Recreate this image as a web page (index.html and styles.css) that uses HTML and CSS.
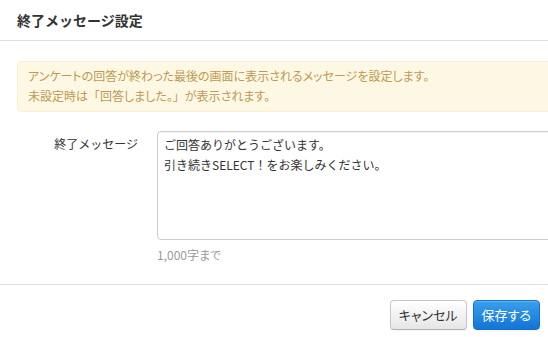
FILE: index.html
```html
<!DOCTYPE html>
<html lang="ja">
<head>
    <meta charset="UTF-8">
    <title>終了メッセージ設定</title>
    <link rel="stylesheet" href="styles.css">
</head>
<body>
    <div class="modal">
        <div class="modal-header">
            <h3>終了メッセージ設定</h3>
        </div>
        <div class="modal-body">
            <div class="alert">
                アンケートの回答が終わった最後の画面に表示されるメッセージを設定します。<br>
                未設定時は<span class="fw">「</span>回答しました。<span class="fw">」</span>が表示されます。
            </div>
            <div class="form-row">
                <label class="form-label" for="end-message">終了メッセージ</label>
                <div class="form-controls">
                    <textarea id="end-message" class="msg-input">ご回答ありがとうございます。
引き続きSELECT！をお楽しみください。</textarea>
                    <p class="help-text">1,000字まで</p>
                </div>
            </div>
        </div>
        <div class="modal-footer">
            <button class="btn">キャンセル</button>
            <button class="btn btn-primary">保存する</button>
        </div>
    </div>
</body>
</html>
```

FILE: styles.css
```css
body { margin: 0; padding: 0; background-color: #fff; color: #333; font-family: "Noto Sans CJK JP", "Noto Sans", sans-serif; font-size: 12px; line-height: 20px; font-feature-settings: "palt"; overflow: hidden; }
.fw { font-feature-settings: normal; }
.modal { width: 548px; background-color: #fff; overflow: hidden; }
.modal-header { height: 41px; padding: 0 17px; border-bottom: 1px solid #e0e0e0; box-sizing: border-box; display: flex; align-items: center; }
.modal-header h3 { margin: 0; font-size: 14px; font-weight: bold; line-height: 20px; color: #333; font-feature-settings: normal; }
.modal-body { padding: 20px 0 0 17px; height: 243px; box-sizing: border-box; }
.alert { margin-right: -20px; padding: 4px 10px 5px 10px; background-color: #fcf8e3; border: 1px solid #fbeed5; border-radius: 4px; color: #c09853; }
.form-row { display: flex; margin-top: 19px; }
.form-label { width: 121px; padding-top: 3px; text-align: right; flex-shrink: 0; font-feature-settings: normal; }
.form-controls { margin-left: 19px; flex-grow: 1; }
.msg-input { display: block; width: 420px; height: 109px; margin: 0; padding: 3px 6px; box-sizing: border-box; border: 1px solid #ccc; border-radius: 4px; font: inherit; line-height: 20px; color: #333; resize: none; box-shadow: inset 0 1px 1px rgba(0,0,0,0.05); font-feature-settings: normal; }
.help-text { margin: 5px 0 0 0; color: #999; }
.modal-footer { border-top: 1px solid #e0e0e0; padding: 15px 8px 15px 0; display: flex; justify-content: flex-end; gap: 6px; }
.btn { height: 30px; padding: 0 8px; font: inherit; font-size: 13px; color: #333; border: 1px solid #c8c8c8; border-bottom-color: #b3b3b3; border-radius: 4px; background: linear-gradient(#ffffff, #e6e6e6); box-shadow: inset 0 1px 0 rgba(255,255,255,0.2), 0 1px 2px rgba(0,0,0,0.05); font-feature-settings: "palt"; }
.btn-primary { color: #fff; border-color: #1a6fc4; background: linear-gradient(#3aa0ec, #1274d6); }
```
